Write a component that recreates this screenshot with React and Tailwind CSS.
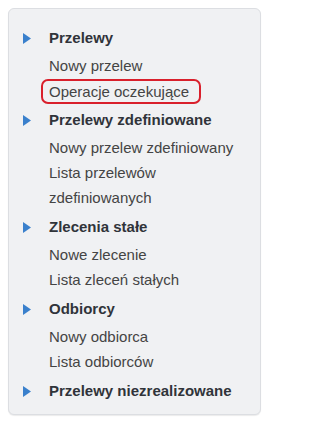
const sections = [
  { title: "Przelewy", items: ["Nowy przelew", "Operacje oczekujące"] },
  {
    title: "Przelewy zdefiniowane",
    items: ["Nowy przelew zdefiniowany", "Lista przelewów", "zdefiniowanych"],
  },
  { title: "Zlecenia stałe", items: ["Nowe zlecenie", "Lista zleceń stałych"] },
  { title: "Odbiorcy", items: ["Nowy odbiorca", "Lista odbiorców"] },
  { title: "Przelewy niezrealizowane", items: [] },
];

function Arrow() {
  return (
    <svg width="8" height="11" viewBox="0 0 8 11" className="shrink-0">
      <path d="M0 0 L8 5.5 L0 11 Z" fill="#3a80cc" />
    </svg>
  );
}

export default function App() {
  return (
    <div className="w-[273px] h-[424px] bg-white p-2 pr-3 font-['Liberation_Sans',Arial,sans-serif]">
      <nav className="h-[407px] rounded-[6px] border border-[#dcdee2] bg-[#f0f1f3] pl-[14px] pt-[13px] shadow-[0_1px_1px_rgba(0,0,0,0.08)]">
        {sections.map((s) => (
          <div key={s.title}>
            <div className="flex h-[32px] items-center">
              <Arrow />
              <span className="ml-[18px] text-[15px] font-bold text-[#30343a]">{s.title}</span>
            </div>
            {s.items.map((it) => (
              <div key={it} className="flex h-[25px] items-center pl-[26px]">
                {it === "Operacje oczekujące" ? (
                  <span className="-ml-[8px] rounded-[7px] border-2 border-[#d9202c] pl-[6px] pr-[10px] leading-[21px] text-[15px] text-[#444]">
                    {it}
                  </span>
                ) : (
                  <span className="text-[15px] text-[#444]">{it}</span>
                )}
              </div>
            ))}
          </div>
        ))}
      </nav>
    </div>
  );
}
